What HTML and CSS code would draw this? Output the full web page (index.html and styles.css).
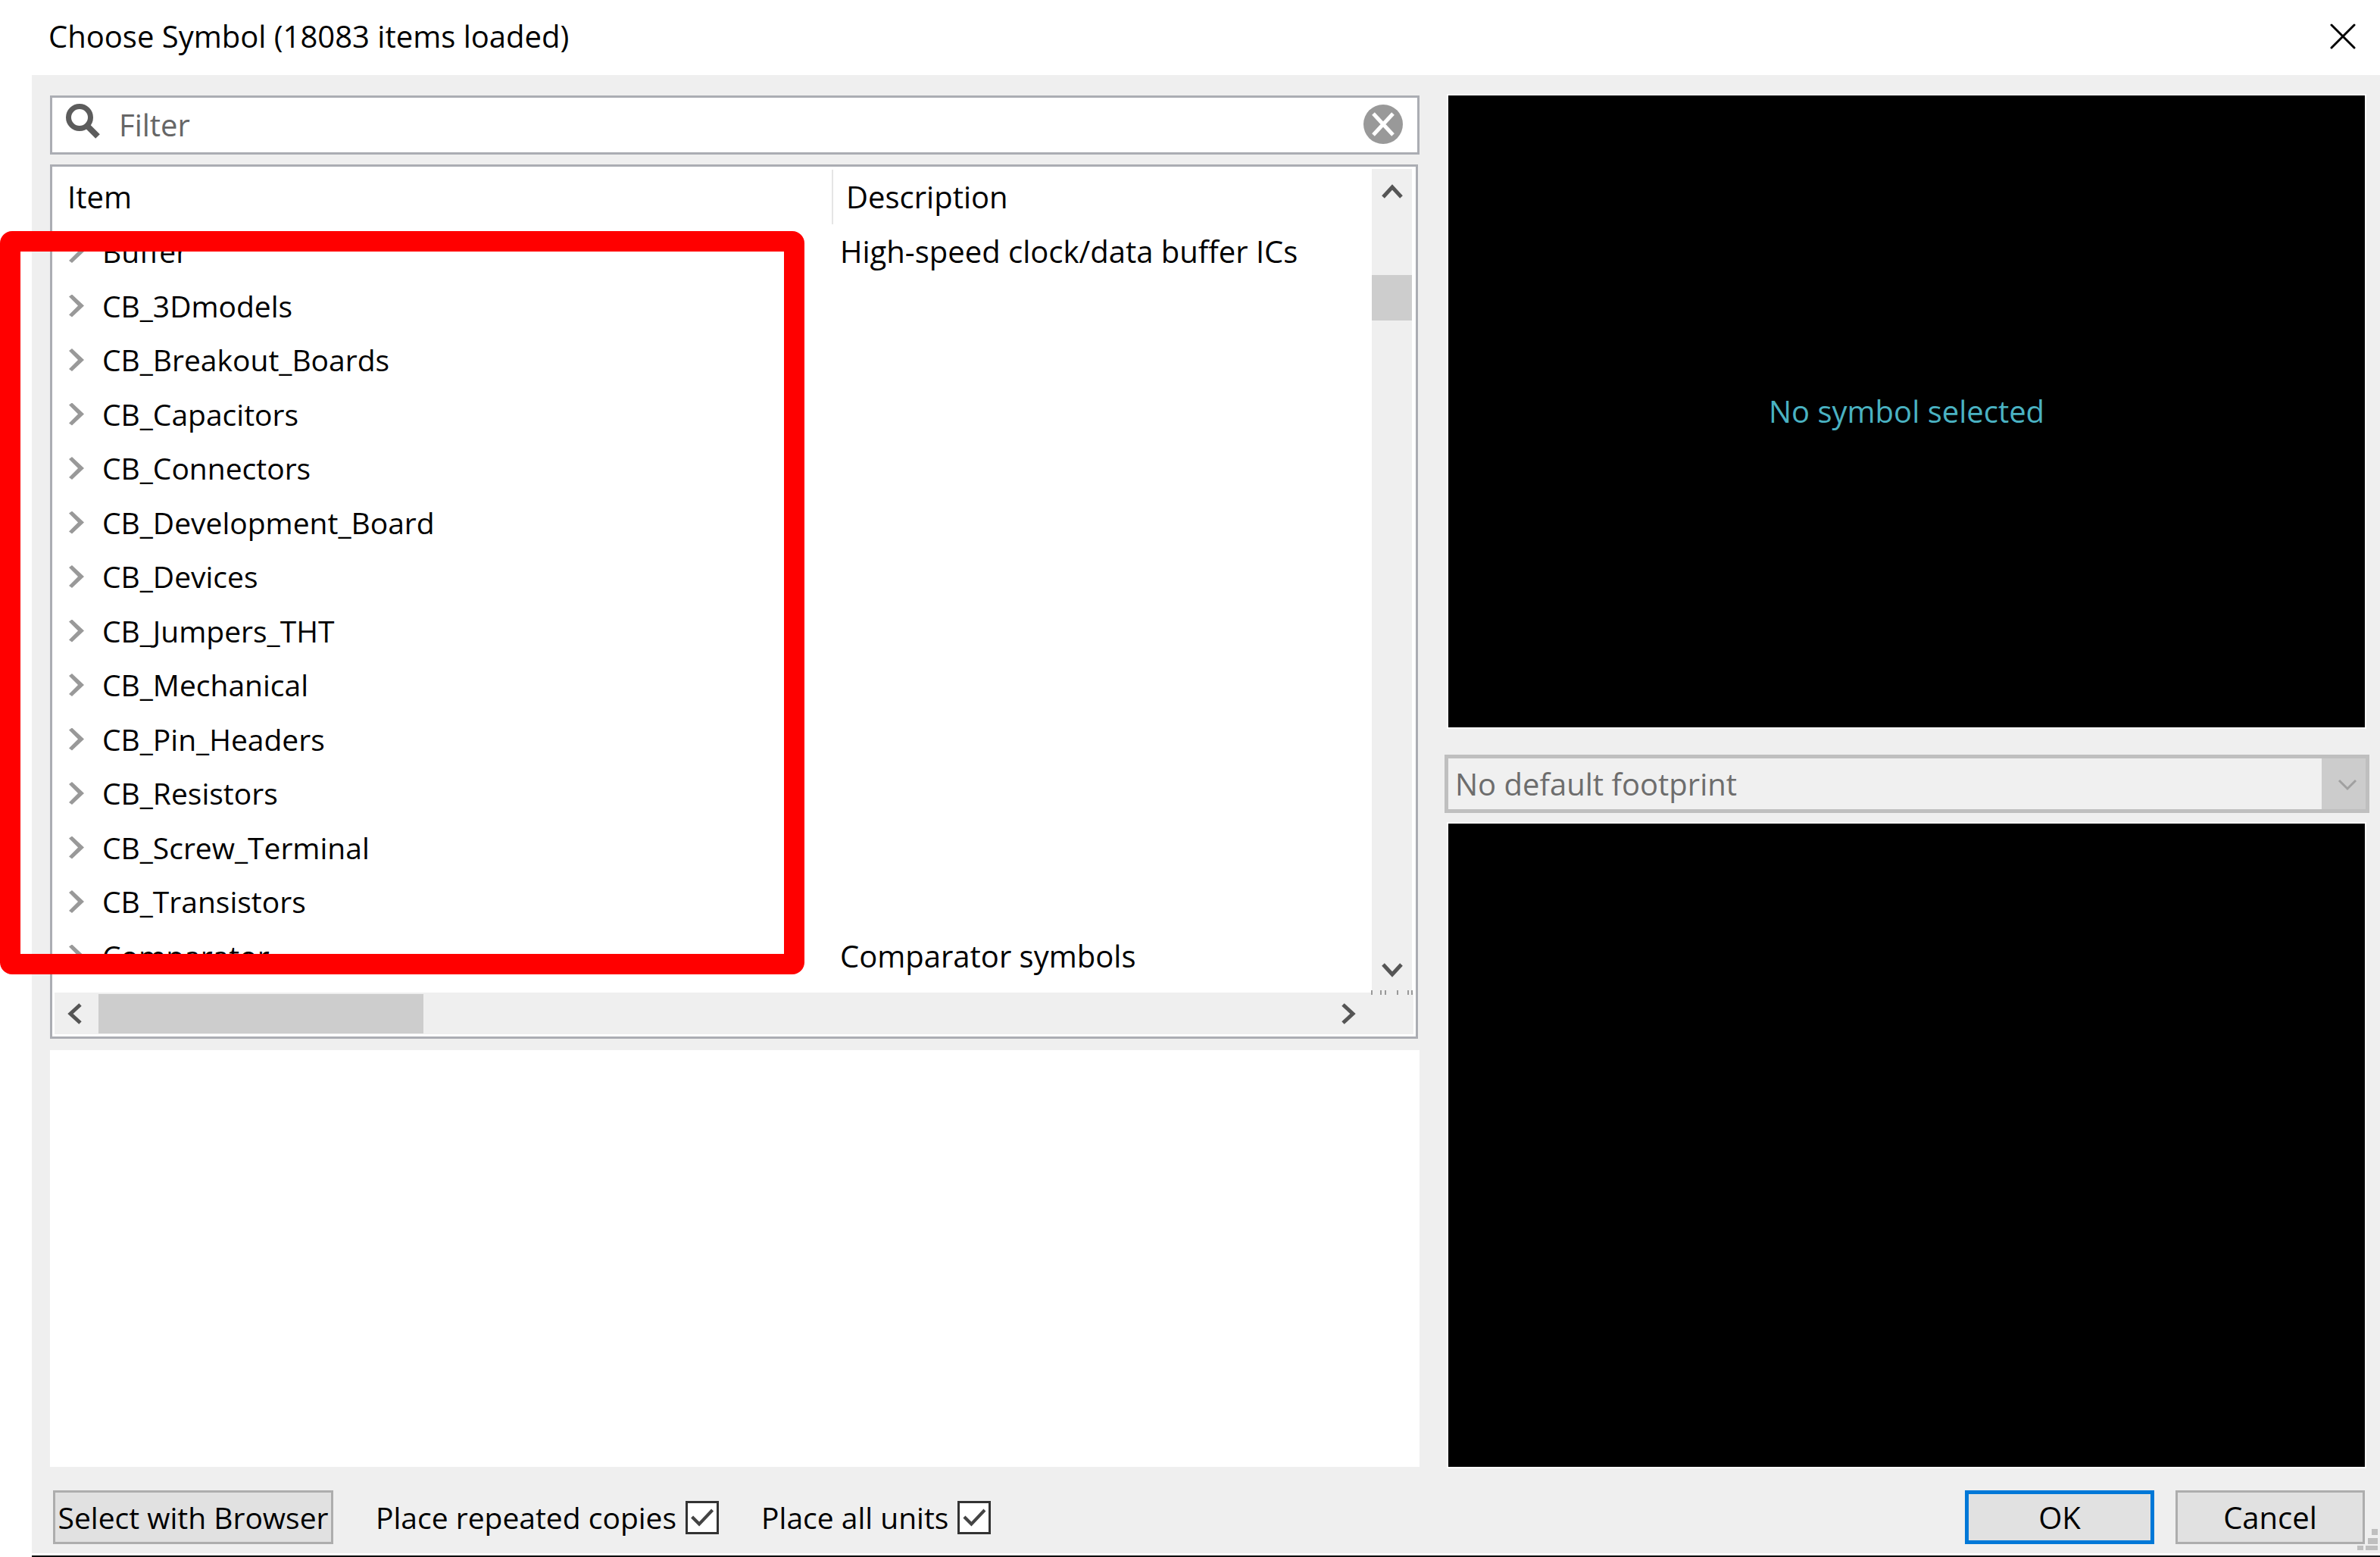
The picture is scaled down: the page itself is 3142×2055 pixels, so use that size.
FILE: index.html
```html
<!DOCTYPE html>
<html lang="en">
<head>
<meta charset="utf-8">
<title>Choose Symbol</title>
<link rel="stylesheet" href="styles.css">
</head>
<body>
<header class="titlebar">
  <h1 class="title">Choose Symbol (18083 items loaded)</h1>
  <button class="icon-button" type="button" aria-label="Close">
    <svg width="34" height="34" viewBox="0 0 34 34"><path d="M2 2L32 32M32 2L2 32" fill="none" stroke="#000" stroke-width="3" stroke-linecap="round"/></svg>
  </button>
</header>
<main class="dialog">
  <div class="panes">
    <section class="left">
      <div class="filter">
        <svg width="46" height="56" viewBox="0 0 46 56"><circle cx="18" cy="18" r="14.500" fill="none" stroke="#5c5c5c" stroke-width="7"/><path d="M28 29L42 43" fill="none" stroke="#5c5c5c" stroke-width="8"/></svg>
        <input class="filter-input" type="text" placeholder="Filter" aria-label="Filter">
        <button class="icon-button" type="button" aria-label="Clear filter">
          <svg width="54" height="54" viewBox="0 0 54 54"><circle cx="27" cy="26" r="26" fill="#999"/><path d="M14 12L40 40M40 12L14 40" fill="none" stroke="#fff" stroke-width="5"/></svg>
        </button>
      </div>
      <div class="list">
        <div class="list-body">
          <table class="tree">
            <thead><tr><th class="col-item">Item</th><th class="col-desc"><span class="divided">Description</span></th></tr></thead>
            <tbody>
              <tr><td><span class="node">Buffer</span></td><td>High-speed clock/data buffer ICs</td></tr>
              <tr><td><span class="node">CB_3Dmodels</span></td><td></td></tr>
              <tr><td><span class="node">CB_Breakout_Boards</span></td><td></td></tr>
              <tr><td><span class="node">CB_Capacitors</span></td><td></td></tr>
              <tr><td><span class="node">CB_Connectors</span></td><td></td></tr>
              <tr><td><span class="node">CB_Development_Board</span></td><td></td></tr>
              <tr><td><span class="node">CB_Devices</span></td><td></td></tr>
              <tr><td><span class="node">CB_Jumpers_THT</span></td><td></td></tr>
              <tr><td><span class="node">CB_Mechanical</span></td><td></td></tr>
              <tr><td><span class="node">CB_Pin_Headers</span></td><td></td></tr>
              <tr><td><span class="node">CB_Resistors</span></td><td></td></tr>
              <tr><td><span class="node">CB_Screw_Terminal</span></td><td></td></tr>
              <tr><td><span class="node">CB_Transistors</span></td><td></td></tr>
              <tr><td><span class="node">Comparator</span></td><td>Comparator symbols</td></tr>
            </tbody>
          </table>
          <div class="vscroll">
            <svg width="28" height="22" viewBox="0 0 28 22"><path d="M2 19L14 6L26 19" fill="none" stroke="#555" stroke-width="5"/></svg>
            <div class="vthumb"></div>
            <svg width="28" height="22" viewBox="0 0 28 22"><path d="M2 3L14 16L26 3" fill="none" stroke="#555" stroke-width="5"/></svg>
          </div>
        </div>
        <div class="hscroll">
          <svg width="22" height="28" viewBox="0 0 22 28"><path d="M19 2L6 14L19 26" fill="none" stroke="#555" stroke-width="5"/></svg>
          <div class="hthumb"></div>
          <svg width="22" height="28" viewBox="0 0 22 28"><path d="M3 2L16 14L3 26" fill="none" stroke="#555" stroke-width="5"/></svg>
          <svg class="corner" width="56" height="6" viewBox="0 0 56 6"><path d="M1 0V6M13 0V6M19 0V6M35 0V6M49 0V6M54 0V6" stroke="#999" stroke-width="2"/></svg>
        </div>
        <div class="highlight"></div>
      </div>
      <div class="details"></div>
    </section>
    <section class="right">
      <div class="preview symbol">No symbol selected</div>
      <div class="combo">
        <select class="combo-select" disabled aria-label="Footprint"><option>No default footprint</option></select>
        <svg class="combo-arrow" width="26" height="16" viewBox="0 0 26 16"><path d="M2 2L13 13L24 2" fill="none" stroke="#a0a0a0" stroke-width="3"/></svg>
      </div>
      <div class="preview footprint"></div>
    </section>
  </div>
  <footer class="actions">
    <button class="button browse" type="button">Select with Browser</button>
    <label class="check">Place repeated copies<input class="checkbox" type="checkbox" checked></label>
    <label class="check">Place all units<input class="checkbox" type="checkbox" checked></label>
    <div class="confirm">
      <button class="button default" type="button">OK</button>
      <button class="button" type="button">Cancel</button>
    </div>
    <svg class="grip" width="28" height="28" viewBox="0 0 28 28"><path d="M19 0h8v8h-8zM14 12h13v8H14zM0 22h8v6H0zM11 22h16v6H11z" fill="#bfbfbf"/></svg>
  </footer>
</main>
</body>
</html>
```
FILE: styles.css
```css
* { box-sizing: border-box; }

body {
  margin: 0;
  min-height: 100vh;
  display: flex;
  flex-direction: column;
  background: #fff;
  color: #000;
  font: 40px/56px "Open Sans", "Noto Sans", sans-serif;
}

svg { display: block; flex: none; }
button, input, select { font: inherit; color: inherit; }

.titlebar {
  height: 99px;
  padding: 0 32px 4px 64px;
  display: flex;
  align-items: center;
  justify-content: space-between;
}
.title { margin: 0; font-size: 40px; font-weight: 400; }
.icon-button { padding: 0; border: 0; background: none; }

.dialog {
  flex: 1;
  display: flex;
  flex-direction: column;
  margin-left: 42px;
  background: #efefef;
  border-bottom: 2px solid #000;
  box-shadow: inset 0 -3px #fff;
}

.panes {
  flex: 1;
  display: grid;
  grid-template-columns: 1808fr 1221fr;
  column-gap: 33px;
  padding: 27px 14px 0 24px;
}

.left { display: flex; flex-direction: column; min-width: 0; }

.filter {
  height: 78px;
  display: flex;
  align-items: center;
  gap: 24px;
  padding: 0 18px;
  background: #fff;
  border: 3px solid #abadb3;
}
.filter-input {
  flex: 1;
  min-width: 0;
  padding: 0;
  border: 0;
  outline: 0;
  background: none;
}
.filter-input::placeholder { color: #666; opacity: 1; }

.list {
  position: relative;
  margin: 13px 2px 15px 0;
  padding: 3px;
  background: #fff;
  border: 3px solid #abadb3;
}
.list-body { display: flex; height: 1087px; }

.tree {
  flex: 1;
  align-self: flex-start;
  table-layout: fixed;
  border-collapse: collapse;
}
.tree th, .tree td { padding: 0; text-align: left; font-weight: 400; white-space: nowrap; }
.tree thead tr { height: 73px; }
.tree tbody tr { height: 72px; }
.tree tbody tr:nth-child(even) { height: 71px; }
.tree .col-item { width: 59%; padding-left: 17px; }
.divided {
  display: block;
  padding: 8px 0 8px 17px;
  border-left: 2px solid #e5e5e5;
}
.tree td:last-child { padding-left: 11px; }
.node { display: flex; align-items: center; gap: 24px; padding-left: 19px; font-size: 39px; }
.node::before {
  content: "";
  width: 20px;
  height: 30px;
  background: #999;
  clip-path: polygon(0 3px, 4px 0, 20px 15px, 4px 30px, 0 27px, 12px 15px);
}

.vscroll {
  width: 53px;
  margin-right: 2px;
  display: flex;
  flex-direction: column;
  align-items: center;
  padding: 18px 0;
  background: #efefef;
}
.vthumb { width: 53px; height: 60px; margin: 100px 0 auto; background: #cdcdcd; }

.hscroll {
  position: relative;
  height: 55px;
  display: flex;
  align-items: center;
  padding: 0 74px 0 15px;
  background: #efefef;
}
.hthumb { width: 429px; height: 52px; margin: 0 auto 0 21px; background: #cdcdcd; }
.corner { position: absolute; top: -3px; right: 0; }

.highlight {
  position: absolute;
  left: -69px;
  top: 85px;
  width: 1062px;
  height: 981px;
  border: 27px solid #f00;
  border-radius: 16px;
}

.details { flex: 1; background: #fff; }

.right { display: flex; flex-direction: column; min-width: 0; }
.preview {
  margin: 0 6px 0 5px;
  display: flex;
  align-items: center;
  justify-content: center;
  background: #000;
  color: #4ab2c2;
  box-shadow: 0 0 0 2px #fff;
}
.symbol { height: 834px; }
.footprint { flex: 1; }

.combo { position: relative; margin: 36px 0 14px; }
.combo-select {
  display: block;
  width: 100%;
  height: 77px;
  padding: 0 68px 0 9px;
  appearance: none;
  border: 5px solid #bfbfbf;
  border-radius: 0;
  background: linear-gradient(#ccc, #ccc) right / 58px 100% no-repeat #f0f0f0;
  color: #6d6d6d;
  opacity: 1;
}
.combo-arrow { position: absolute; right: 16px; top: 32px; }

.actions {
  position: relative;
  display: flex;
  align-items: center;
  padding: 31px 20px 15px 28px;
}
.button {
  width: 250px;
  height: 71px;
  padding: 0;
  border: 3px solid #adadad;
  background: #e1e1e1;
  white-space: nowrap;
}
.browse { width: 370px; font-size: 39px; }
.default { border: 5px solid #0078d7; }
.check { display: flex; align-items: center; gap: 12px; margin-left: 56px; font-size: 39px; }
.checkbox {
  appearance: none;
  width: 44px;
  height: 44px;
  margin: 0;
  border: 3px solid #333;
  background: #fff;
}
.checkbox:checked::before {
  content: "";
  display: block;
  width: 38px;
  height: 38px;
  background: #444;
  clip-path: polygon(4px 20px, 7px 17px, 15px 25px, 31px 8px, 34px 11px, 15px 31px);
}
.confirm { display: flex; gap: 28px; margin-left: auto; }
.grip { position: absolute; right: 2px; bottom: 7px; }
```
